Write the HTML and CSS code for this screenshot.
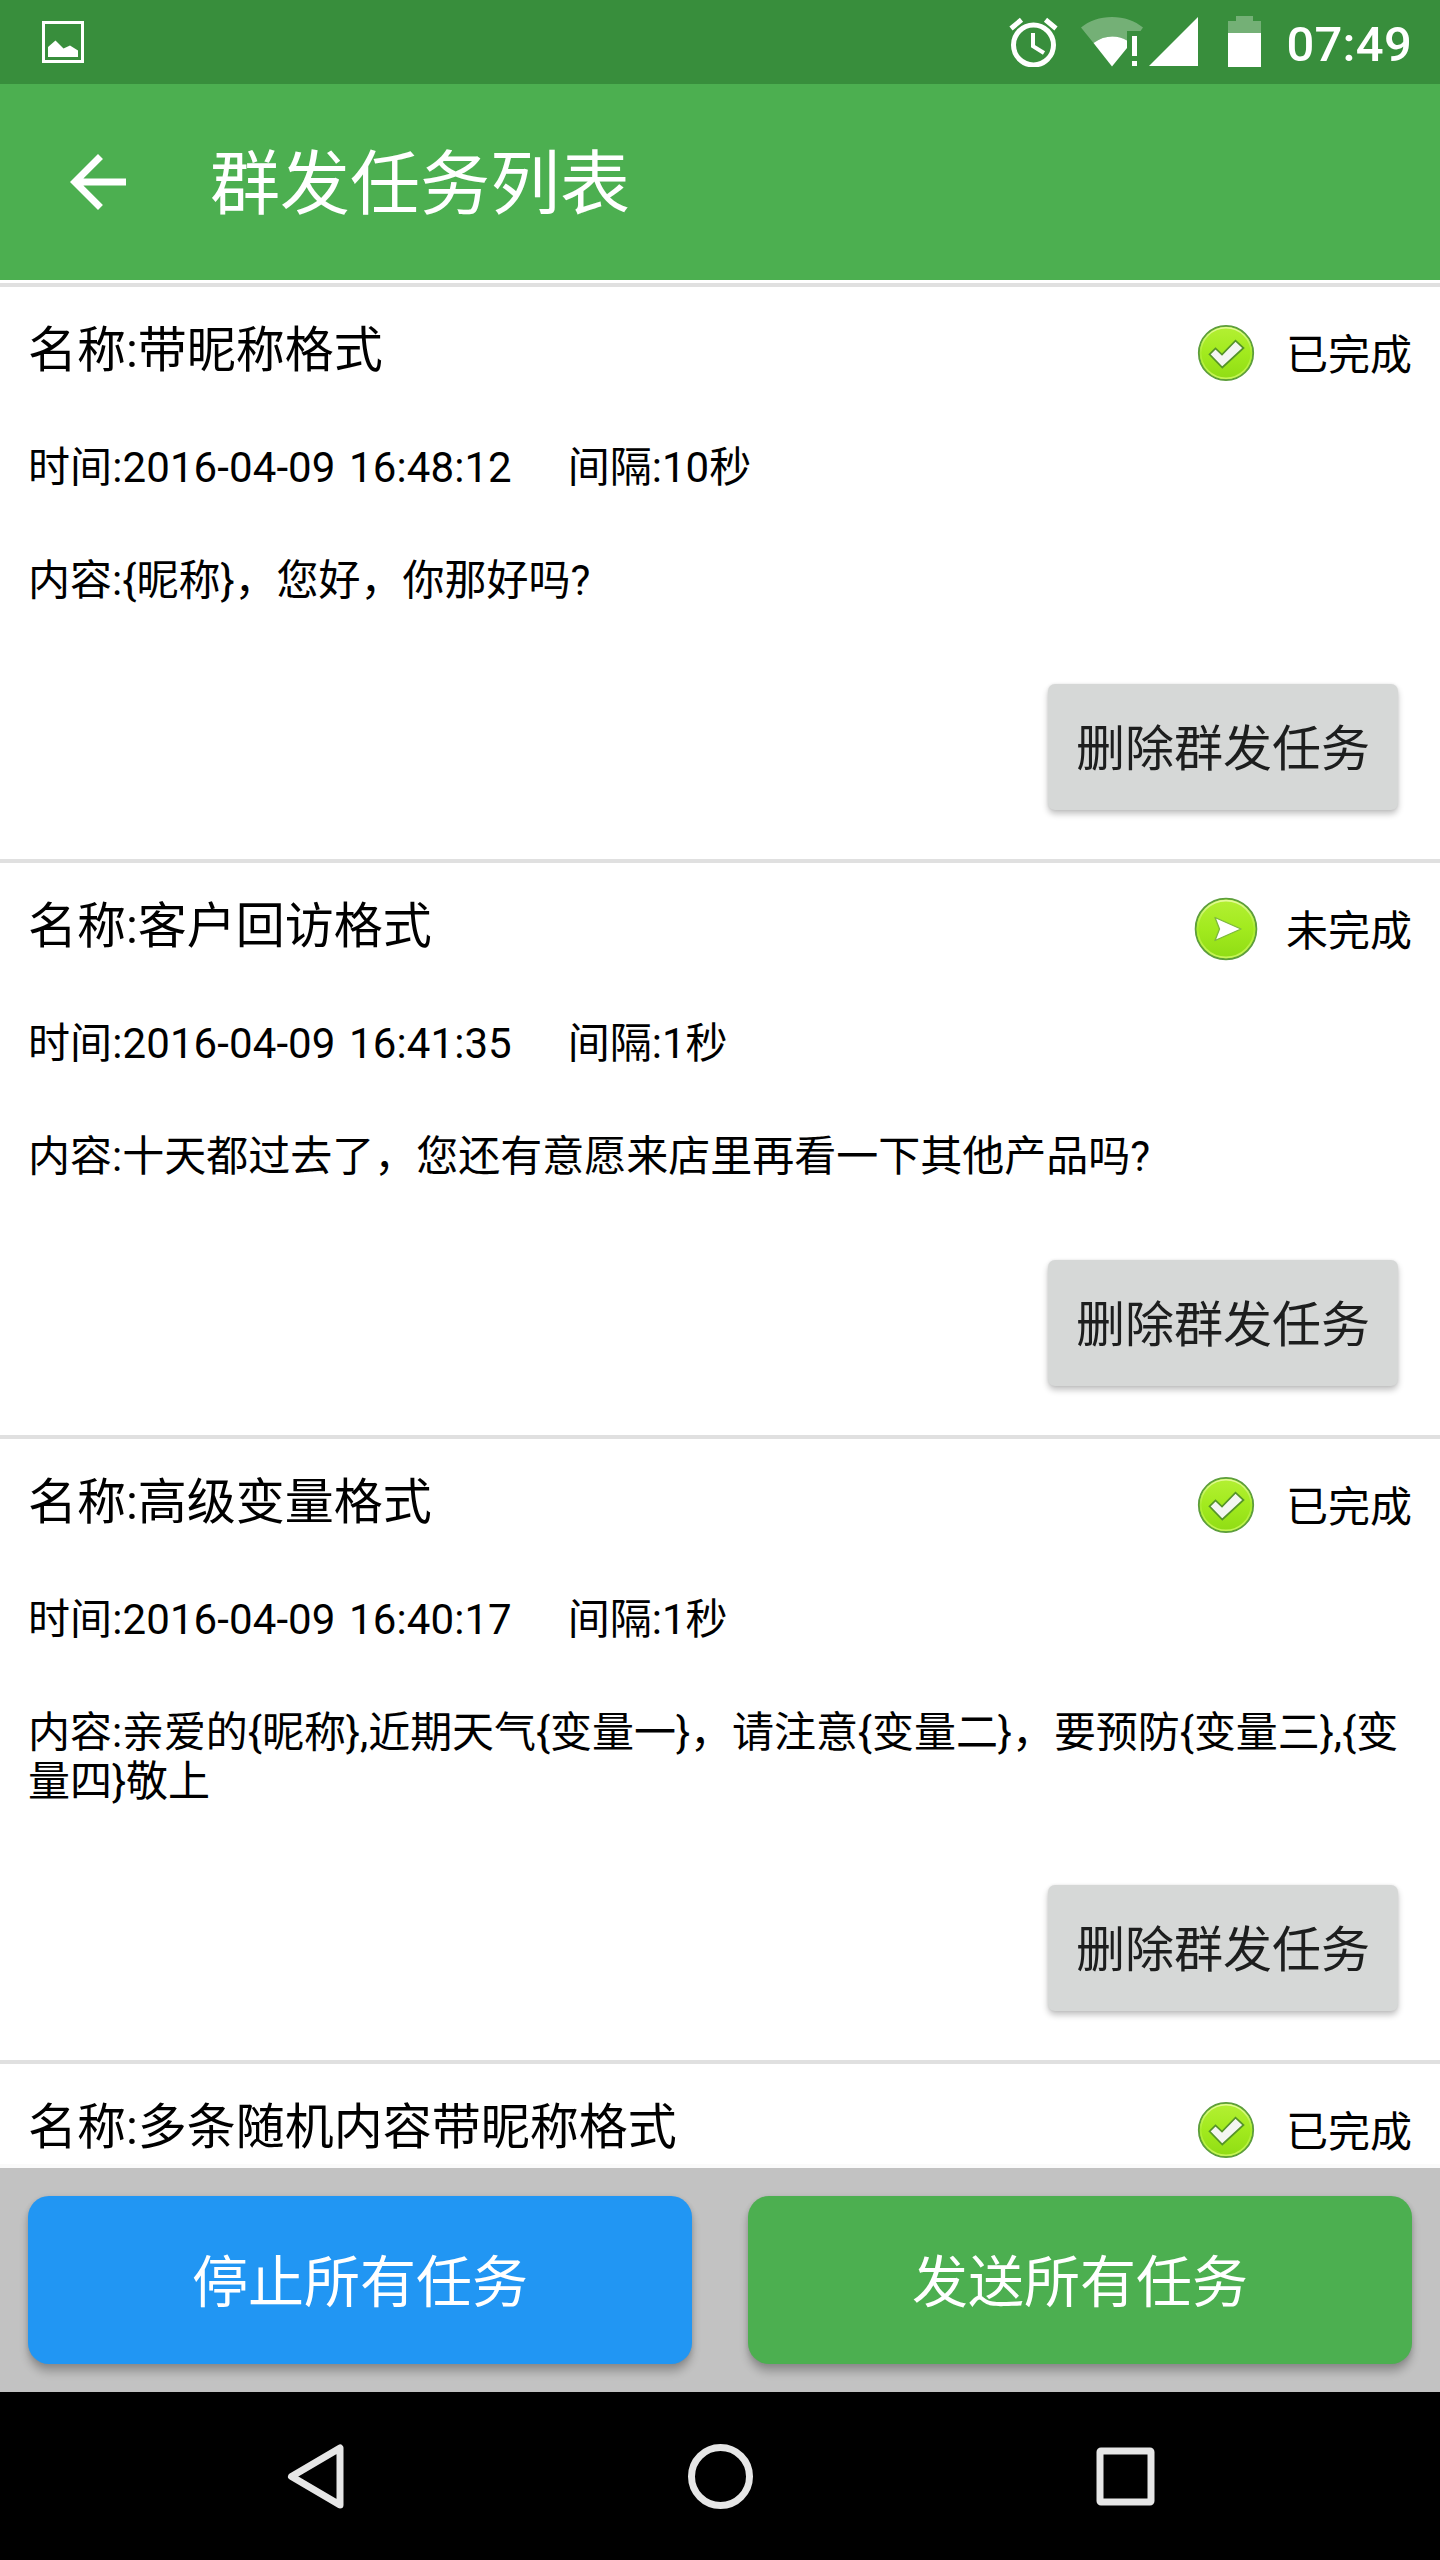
FILE: index.html
```html
<!DOCTYPE html>
<html lang="zh-CN">
<head>
<meta charset="utf-8">
<title>群发任务列表</title>
<link rel="stylesheet" href="styles.css">
</head>
<body>
<svg class="defs" width="0" height="0" aria-hidden="true">
  <defs>
    <linearGradient id="lime" x1="0" y1="0" x2="0" y2="1">
      <stop offset="0" stop-color="#b4f034"/>
      <stop offset="0.5" stop-color="#a2ea1e"/>
      <stop offset="1" stop-color="#8fdc14"/>
    </linearGradient>
    <linearGradient id="rim" x1="0" y1="0" x2="0" y2="1">
      <stop offset="0" stop-color="#e4fa9a"/>
      <stop offset="0.5" stop-color="#a8ec2c"/>
      <stop offset="1" stop-color="#c6f458"/>
    </linearGradient>
    <symbol id="done" viewBox="0 0 64 64">
      <circle cx="32" cy="32" r="27.2" fill="url(#lime)" stroke="#5d9e3c" stroke-width="1.8"/>
      <circle cx="32" cy="32" r="25.3" fill="none" stroke="url(#rim)" stroke-width="1.6"/>
      <path d="M15.500 33.300 21.500 27.500 28 33.500 41.500 19.700 49.500 27 28.300 46.500Z" fill="#f4f6f2" stroke="#559428" stroke-width="1.7"/>
    </symbol>
    <symbol id="pending" viewBox="0 0 64 64">
      <circle cx="32" cy="32" r="30.400" fill="url(#lime)" stroke="#5d9e3c" stroke-width="1.8"/>
      <circle cx="32" cy="32" r="28.4" fill="none" stroke="url(#rim)" stroke-width="1.8"/>
      <path d="M21 20.500 47 32 21 43.500 25.500 32Z" fill="#fff" stroke="#7cb83c" stroke-width="1.300" stroke-linejoin="round"/>
    </symbol>
  </defs>
</svg>
<div class="screen">
  <header class="statusbar">
    <svg class="ic-image" width="42" height="42" viewBox="0 0 42 42"><path fill="none" stroke="#fff" stroke-width="3" d="M1.500 1.500h39v39h-39z"/><path fill="#fff" d="M6 36V26l7.500-6.500 8 8 6.500-3 8 5V36z"/></svg>
    <svg class="ic-alarm" width="50" height="50" viewBox="0 0 50 50"><g fill="none" stroke="#fff"><circle cx="24.500" cy="28" r="20" stroke-width="5"/><path stroke-width="5" d="M2 11.500 12.500 2.800M47 11.500 36.500 2.800"/><path stroke-width="4" d="M24 16v13.200L35 36"/></g></svg>
    <svg class="ic-wifi" width="63" height="50" viewBox="0 0 63 50"><path fill="#fff" fill-opacity=".3" d="M0 10.500C8 4 19 0 31 0s23 4 31 10.500L59.500 14H46v9.500C36 17.500 23 18 12.500 26Z"/><path fill="#fff" d="M12.500 26C23 18 36 17.500 46 23.500V31L31 49.500Z"/><path fill="#fff" d="M51 19h5v20h-5zM51 44h5v5h-5z"/></svg>
    <svg class="ic-signal" width="49" height="49" viewBox="0 0 49 49"><path fill="#fff" d="M49 0v49H0z"/></svg>
    <svg class="ic-battery" width="33" height="51" viewBox="0 0 33 51"><path fill="#fff" fill-opacity=".3" d="M0 5h8V0h17v5h8v12H0z"/><path fill="#fff" d="M0 17h33v34H0z"/></svg>
    <span class="clock">07:49</span>
  </header>
  <div class="appbar">
    <svg width="84" height="84" viewBox="0 0 24 24"><path fill="#fff" d="M20 11H7.830l5.590-5.590L12 4l-8 8 8 8 1.410-1.410L7.830 13H20v-2z"/></svg>
    <h1 class="title">群发任务列表</h1>
  </div>
  <main class="list">
    <section class="task">
      <div class="head"><span class="name">名称:带昵称格式</span><svg class="mark" viewBox="0 0 64 64"><use href="#done"/></svg><span class="state">已完成</span></div>
      <div class="meta"><span class="time">时间:2016-04-09 16:48:12</span><span>间隔:10秒</span></div>
      <p class="content">内容:{昵称}，您好，你那好吗?</p>
      <button class="delete">删除群发任务</button>
    </section>
    <section class="task">
      <div class="head"><span class="name">名称:客户回访格式</span><svg class="mark" viewBox="0 0 64 64"><use href="#pending"/></svg><span class="state">未完成</span></div>
      <div class="meta"><span class="time">时间:2016-04-09 16:41:35</span><span>间隔:1秒</span></div>
      <p class="content">内容:十天都过去了，您还有意愿来店里再看一下其他产品吗?</p>
      <button class="delete">删除群发任务</button>
    </section>
    <section class="task">
      <div class="head"><span class="name">名称:高级变量格式</span><svg class="mark" viewBox="0 0 64 64"><use href="#done"/></svg><span class="state">已完成</span></div>
      <div class="meta"><span class="time">时间:2016-04-09 16:40:17</span><span>间隔:1秒</span></div>
      <p class="content tight">内容:亲爱的{昵称},近期天气{变量一}，请注意{变量二}，要预防{变量三},{变<br>量四}敬上</p>
      <button class="delete">删除群发任务</button>
    </section>
    <section class="task">
      <div class="head"><span class="name">名称:多条随机内容带昵称格式</span><svg class="mark" viewBox="0 0 64 64"><use href="#done"/></svg><span class="state">已完成</span></div>
    </section>
  </main>
  <footer class="actions">
    <button class="action stop">停止所有任务</button>
    <button class="action send">发送所有任务</button>
  </footer>
  <nav class="navbar">
    <svg width="80" height="80" viewBox="-.5 -.5 80 80"><path fill="none" stroke="#e6e6e6" stroke-width="7" stroke-linejoin="round" d="M64.500 11.500v57L16 40z"/></svg>
    <svg width="80" height="80" viewBox="-.5 -.5 80 80"><circle cx="40" cy="40" r="29" fill="none" stroke="#e6e6e6" stroke-width="7"/></svg>
    <svg width="80" height="80" viewBox="-.5 -.5 80 80"><rect x="14.500" y="14.500" width="51" height="51" rx="1" fill="none" stroke="#e6e6e6" stroke-width="7" stroke-linejoin="round"/></svg>
  </nav>
</div>
</body>
</html>
```
FILE: styles.css
```css
* { box-sizing: border-box; margin: 0; padding: 0; }
body { background: #fff; font-family: Roboto, "Noto Sans CJK SC", sans-serif; color: #000; }
svg { display: block; flex: none; }
.defs { position: absolute; }
button { border: 0; font-family: inherit; font-weight: 400; }
.screen { width: 1440px; height: 2560px; display: flex; flex-direction: column; overflow: hidden; }

.statusbar { height: 84px; flex: none; background: #388e3c; display: flex; align-items: flex-start; padding: 16px 28px 0 42px; }
.ic-image { margin-top: 5px; margin-right: auto; }
.ic-alarm { margin-top: 1px; }
.ic-wifi { margin: 1px 0 0 22px; }
.ic-signal { margin: 1px 0 0 5px; }
.ic-battery { margin-left: 30px; }
.clock { margin-left: 25px; color: #fff; font-size: 49px; font-weight: 500; line-height: 57px; letter-spacing: .25px; }

.appbar { height: 196px; flex: none; background: #4caf50; display: flex; align-items: center; padding-left: 56px; gap: 70px; }
.title { color: #fff; font-size: 70px; font-weight: 400; line-height: 82px; padding-top: 5px; }

.list { flex: 1; min-height: 0; overflow: hidden; padding-top: 3px; border-bottom: 4px solid #fafafa; }
.task { border-top: 4px solid #e0e0e0; padding: 35px 28px 49px; display: flex; flex-direction: column; }
.head { display: flex; height: 57px; align-items: flex-start; }
.name { flex: 1; font-size: 49px; line-height: 57px; }
.mark { width: 64px; height: 64px; margin: -1px 28px 0 0; }
.state { font-size: 42px; line-height: 49px; margin-top: 9px; }
.meta { display: flex; gap: 56px; margin-top: 64px; font-size: 42px; line-height: 49px; }
.time { word-spacing: 3px; letter-spacing: .1px; }
.content { margin-top: 64px; font-size: 42px; line-height: 49px; white-space: nowrap; }
.tight { letter-spacing: -.06px; }
.delete { align-self: flex-end; width: 350px; height: 126px; margin: 79px 14px 0 0; padding-top: 4px; border-radius: 7px; background: #d6d8d7; color: #1d1e1e; font-size: 49px; line-height: 57px; box-shadow: 0 4px 6px rgba(0,0,0,.24), 0 0 3px rgba(0,0,0,.08); }

.actions { height: 224px; flex: none; background: #c2c2c2; display: flex; gap: 56px; padding: 28px; }
.action { flex: 1; border-radius: 21px; padding-top: 5px; color: #fff; font-size: 56px; line-height: 66px; box-shadow: 0 8px 8px rgba(0,0,0,.23), 0 1px 5px rgba(0,0,0,.12); }
.stop { background: #2196f3; }
.send { background: #4caf50; }

.navbar { height: 168px; flex: none; background: #000; display: flex; align-items: center; justify-content: center; gap: 325px; }
```
